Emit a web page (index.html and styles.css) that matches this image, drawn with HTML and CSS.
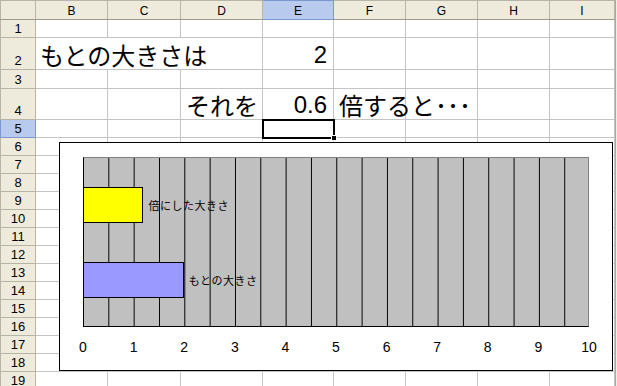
FILE: index.html
```html
<!DOCTYPE html>
<html lang="ja">
<head>
    <meta charset="UTF-8">
    <meta name="viewport" content="width=device-width, initial-scale=1.0">
    <title>倍にした大きさ</title>
    <link rel="stylesheet" href="styles.css">
</head>
<body>
    <div class="book">
        <table class="sheet">
            <colgroup>
                <col class="col-head"><col class="col-b"><col class="col-c"><col class="col-d"><col class="col-e"><col class="col-f"><col class="col-g"><col class="col-h"><col class="col-i">
            </colgroup>
            <tr class="row-cols">
                <th class="corner"></th><th>B</th><th>C</th><th>D</th><th class="sel">E</th><th>F</th><th>G</th><th>H</th><th class="col-last">I</th>
            </tr>
            <tr class="row-1"><th>1</th><td></td><td></td><td></td><td></td><td></td><td></td><td></td><td></td></tr>
            <tr class="row-2"><th>2</th><td colspan="3" class="big jp">もとの大きさは</td><td class="big num">2</td><td></td><td></td><td></td><td></td></tr>
            <tr class="row-3"><th>3</th><td></td><td></td><td></td><td></td><td></td><td></td><td></td><td></td></tr>
            <tr class="row-4"><th>4</th><td></td><td></td><td class="big jp right">それを</td><td class="big num">0.6</td><td class="big jp after">倍すると･･･</td><td></td><td></td><td></td></tr>
            <tr><th class="sel">5</th><td></td><td></td><td></td><td class="current"></td><td></td><td></td><td></td><td></td></tr>
            <tr><th>6</th><td></td><td></td><td></td><td></td><td></td><td></td><td></td><td></td></tr>
            <tr><th>7</th><td></td><td></td><td></td><td></td><td></td><td></td><td></td><td></td></tr>
            <tr><th>8</th><td></td><td></td><td></td><td></td><td></td><td></td><td></td><td></td></tr>
            <tr><th>9</th><td></td><td></td><td></td><td></td><td></td><td></td><td></td><td></td></tr>
            <tr><th>10</th><td></td><td></td><td></td><td></td><td></td><td></td><td></td><td></td></tr>
            <tr><th>11</th><td></td><td></td><td></td><td></td><td></td><td></td><td></td><td></td></tr>
            <tr><th>12</th><td></td><td></td><td></td><td></td><td></td><td></td><td></td><td></td></tr>
            <tr><th>13</th><td></td><td></td><td></td><td></td><td></td><td></td><td></td><td></td></tr>
            <tr><th>14</th><td></td><td></td><td></td><td></td><td></td><td></td><td></td><td></td></tr>
            <tr><th>15</th><td></td><td></td><td></td><td></td><td></td><td></td><td></td><td></td></tr>
            <tr><th>16</th><td></td><td></td><td></td><td></td><td></td><td></td><td></td><td></td></tr>
            <tr><th>17</th><td></td><td></td><td></td><td></td><td></td><td></td><td></td><td></td></tr>
            <tr><th>18</th><td></td><td></td><td></td><td></td><td></td><td></td><td></td><td></td></tr>
            <tr><th>19</th><td></td><td></td><td></td><td></td><td></td><td></td><td></td><td></td></tr>
        </table>
        <div class="edge"></div>

        <div class="chart">
            <div class="plot">
                <div class="series">
                    <div class="bar bar-times" style="width: 12%"></div>
                    <span class="label">倍にした大きさ</span>
                </div>
                <div class="series">
                    <div class="bar bar-base" style="width: 20%"></div>
                    <span class="label">もとの大きさ</span>
                </div>
            </div>
            <div class="axis">
                <span>0</span><span>1</span><span>2</span><span>3</span><span>4</span><span>5</span><span>6</span><span>7</span><span>8</span><span>9</span><span>10</span>
            </div>
        </div>
    </div>
</body>
</html>
```

FILE: styles.css
```css
body {
    margin: 0;
    background: #fff;
    color: #000;
    font-family: "Liberation Sans", "Noto Sans CJK JP", sans-serif;
    overflow: hidden;
}
.book {
    position: relative;
    display: flex;
    width: 617px;
    height: 386px;
    overflow: hidden;
}
.sheet {
    flex: none;
    width: 614px;
    table-layout: fixed;
    border-collapse: collapse;
}
.col-head { width: 35px; }
.col-b { width: 72px; }
.col-c { width: 73px; }
.col-d { width: 82px; }
.col-e { width: 71px; }
.col-f { width: 72px; }
.col-g { width: 72px; }
.col-h { width: 72px; }
.col-i { width: 65px; }

.sheet th, .sheet td {
    padding: 0;
    border: 1px solid #c4c4c4;
    white-space: nowrap;
    overflow: visible;
}
.sheet tr { height: 18px; }
.sheet .row-cols { height: 19px; }
.sheet .row-2 { height: 32px; }
.sheet .row-3 { height: 19px; }
.sheet .row-4 { height: 31px; }

.sheet th {
    background: #eeebdc;
    border-color: #b9b5a6;
    font-size: 13px;
    font-weight: normal;
    line-height: 14px;
    vertical-align: bottom;
    padding-bottom: 1px;
}
.sheet .row-cols th {
    font-size: 12px;
    vertical-align: middle;
    padding: 1px 0 0;
    border-bottom-color: #9f9b8c;
}
.sheet .col-last { padding-left: 8px; }
.sheet th.sel {
    background: #b8cbef;
    border-color: #7d98cf;
}

.sheet .big {
    font-size: 24px;
    line-height: 28px;
    vertical-align: bottom;
}
.sheet .jp {
    font-family: "Noto Sans CJK JP", sans-serif;
    padding-left: 4px;
}
.sheet .jp.right {
    text-align: right;
    padding: 0 4px 0 0;
}
.sheet .jp.after { padding-left: 5px; }
.sheet .num {
    text-align: right;
    padding-right: 6px;
}
.current {
    position: relative;
    outline: 2px solid #000;
    outline-offset: -1px;
}
.current::after {
    content: "";
    position: absolute;
    right: -4px;
    bottom: -4px;
    width: 4px;
    height: 4px;
    background: #000;
    border: 1px solid #fff;
}

.edge {
    flex: 1;
    background: #f1eee2;
    border-left: 1px solid #a9a9a9;
}

.chart {
    position: absolute;
    left: 59px;
    top: 142px;
    width: 554px;
    height: 229px;
    box-sizing: border-box;
    background: #fff;
    border: 1px solid #000;
    padding: 14px 0 0 23px;
}
.plot {
    box-sizing: border-box;
    width: 506px;
    height: 170px;
    padding-top: 29px;
    display: flex;
    flex-direction: column;
    gap: 39px;
    border: 1px solid #808080;
    border-left-color: #000;
    border-bottom-color: #000;
    background-color: #c0c0c0;
    background-image: linear-gradient(to right, #000 0 1px, transparent 1px);
    background-size: 25.33px 100%;
    background-position: -1px 0;
}
.series {
    display: flex;
    align-items: center;
    height: 36px;
}
.bar {
    box-sizing: border-box;
    height: 36px;
    margin-left: -1px;
    border: 1px solid #000;
}
.bar-times { background: #ffff00; }
.bar-base { background: #9999ff; }
.label {
    margin-left: 5px;
    font-family: "Noto Sans CJK JP", sans-serif;
    font-size: 11px;
    letter-spacing: 0.5px;
}
.axis {
    display: flex;
    justify-content: space-between;
    width: 526px;
    margin: 12px 0 0 -10px;
    font-size: 14px;
    line-height: 16px;
}
.axis span {
    width: 20px;
    text-align: center;
}
```
